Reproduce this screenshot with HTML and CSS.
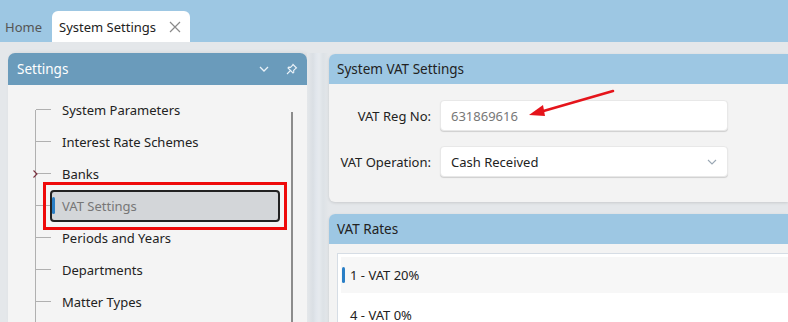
FILE: index.html
```html
<!DOCTYPE html>
<html>
<head>
<meta charset="utf-8">
<link rel="stylesheet" href="styles.css">
</head>
<body>
<div class="app">
  <div class="tabbar">
    <div class="tab home">Home</div>
    <div class="tab active">System Settings
      <svg class="close" width="12" height="12" viewBox="0 0 12 12"><path d="M1 1L11 11M11 1L1 11" stroke="#8a8a8a" stroke-width="1.2" fill="none"/></svg>
    </div>
  </div>
  <div class="main">
    <div class="left">
      <div class="lhead">
        <span class="ltitle">Settings</span>
        <svg class="chev" width="10" height="6" viewBox="0 0 10 6"><path d="M1 1L5 5L9 1" stroke="#eaf2f8" stroke-width="1.3" fill="none"/></svg>
        <svg class="pin" width="12" height="12" viewBox="0 0 12 12"><g fill="none" stroke="#eaf2f8" stroke-width="1.1"><path d="M7 1.5L10.5 5L9.5 5.6L7.6 7.5L7.8 9.3L7 10L2 5L2.7 4.2L4.5 4.4L6.4 2.5Z"/><path d="M4.5 7.5L1 11"/></g></svg>
      </div>
      <div class="lbody">
        <div class="tree">
          <div class="row"><span class="tick"></span>System Parameters</div>
          <div class="row"><span class="tick"></span>Interest Rate Schemes</div>
          <div class="row"><span class="tick"></span><svg class="exp" width="5" height="8" viewBox="0 0 5 8"><path d="M0.5 0.5L4 4L0.5 7.5" stroke="#7a2e3c" stroke-width="1.1" fill="none"/></svg>Banks</div>
          <div class="row sel"><span class="tick"></span><div class="selbox"><span class="bar"></span>VAT Settings</div></div>
          <div class="row"><span class="tick"></span>Periods and Years</div>
          <div class="row"><span class="tick"></span>Departments</div>
          <div class="row"><span class="tick"></span>Matter Types</div>
        </div>
        <div class="scroll"></div>
      </div>
    </div>
    <div class="splitter"></div>
    <div class="right">
      <div class="card first">
        <div class="chead">System VAT Settings</div>
        <div class="cbody form">
          <div class="frow"><label>VAT Reg No:</label><div class="input muted">631869616</div></div>
          <div class="frow"><label>VAT Operation:</label><div class="input">Cash Received
            <svg class="dd" width="10" height="6" viewBox="0 0 10 6"><path d="M1 1L5 5L9 1" stroke="#9aa7b4" stroke-width="1.1" fill="none"/></svg></div></div>
        </div>
      </div>
      <div class="card second">
        <div class="chead">VAT Rates</div>
        <div class="cbody list">
          <div class="listbox">
            <div class="item cur"><span class="bar"></span>1 - VAT 20%</div>
            <div class="item next">4 - VAT 0%</div>
          </div>
        </div>
      </div>
    </div>
  </div>
  <svg class="arrow" width="90" height="34" viewBox="0 0 90 34"><path d="M87 2L14 23" stroke="#e5141b" stroke-width="2.6" fill="none" stroke-linecap="round"/><path d="M3 26L17 16L19 27Z" fill="#e5141b"/></svg>
</div>
</body>
</html>
```
FILE: styles.css
```css
html, body { margin: 0; padding: 0; }
body {
  width: 788px; height: 322px; overflow: hidden;
  font-family: "Noto Sans", "Open Sans", sans-serif;
  font-size: 13px; color: #222;
  background: #e4e7ea;
}
.app { position: relative; width: 788px; height: 322px; overflow: hidden; }
.tabbar {
  height: 42px; background: #9dc7e3;
  display: flex; align-items: flex-end;
}
.tab { height: 31px; display: flex; align-items: center; }
.tab.home { padding: 0 10px 0 5px; color: #555; }
.tab.active {
  background: #fff; border-radius: 6px 6px 0 0; box-sizing: border-box;
  padding: 0 9px 0 7px; width: 138px; justify-content: space-between; color: #222;
}
.close { margin-top: 1px; }
.main { display: flex; height: 280px; padding-top: 11px; box-sizing: border-box; }
.left {
  margin-left: 8px; width: 299px; display: flex; flex-direction: column;
  box-shadow: 2px 0 4px rgba(0,0,0,0.08);
  border-radius: 7px 7px 0 0;
}
.lhead {
  height: 32px; background: #6a9bbb; border-radius: 7px 7px 0 0;
  display: flex; align-items: center; padding: 0 9px; color: #fff; flex-shrink: 0;
}
.ltitle { flex: 1; font-size: 13.5px; }
.chev { margin-right: 17px; }
.lbody { flex: 1; background: #f4f4f4; position: relative; display: flex; }
.tree {
  flex: 1; position: relative; margin-left: 27px;
  border-left: 1px solid #b0b0b0; margin-top: 25px;
}
.row {
  height: 32px; display: flex; align-items: center; position: relative;
  padding-left: 26px; margin-top: -16px; margin-bottom: 16px; color: #222;
}
.tick { position: absolute; left: 0; top: 15px; width: 15px; border-top: 1px solid #b0b0b0; }
.exp { position: absolute; left: -3px; top: 12px; }
.row.sel { padding-left: 14px; }
.selbox {
  position: relative; box-sizing: border-box;
  width: 230px; height: 32px; background: #d3d6d9; border: 2px solid #222; border-radius: 4px;
  display: flex; align-items: center; padding-left: 10px; color: #777;
}
.selbox::after {
  content: ""; position: absolute; left: -9px; top: -10px; right: -9px; bottom: -10px;
  border: 3px solid #ee0a0a;
}
.selbox .bar { position: absolute; left: 0; top: 5px; width: 3px; height: 17px; background: #2a7fc6; border-radius: 2px; }
.scroll { width: 2px; background: #8c8c8c; margin: 27px 14px 0 0; }
.splitter {
  width: 22px;
  background: linear-gradient(to right, #e4e7ea 0, #dadfe4 6px, #e1e6ec 9px, #e6eaee 12px, #dde2e6 16px, #e4e7ea 22px);
}
.right { flex: 1; display: flex; flex-direction: column; gap: 12px; padding-top: 1px; }
.card { border-radius: 6px 0 0 6px; box-shadow: 0 1px 3px rgba(0,0,0,0.12); background: #f3f3f3; }
.chead {
  height: 30px; background: #9dc7e3; border-radius: 6px 0 0 0;
  display: flex; align-items: center; padding-left: 8px; color: #222; font-size: 13.5px;
}
.form { padding: 16px 0 25px 0; display: flex; flex-direction: column; gap: 15px; }
.frow { display: flex; align-items: center; }
.frow label { width: 111px; text-align: right; padding-right: 9px; box-sizing: border-box; white-space: nowrap; }
.input {
  width: 288px; height: 31px; box-sizing: border-box; background: #fff; border-radius: 4px;
  box-shadow: 0 1px 1px rgba(0,0,0,0.15); border: 1px solid #e8e8e8;
  display: flex; align-items: center; padding: 0 10px; justify-content: space-between;
}
.input.muted { color: #777; }
.list { padding: 9px 0 0 8px; height: 120px; }
.listbox { background: #fff; border: 1px solid #d6dde5; border-right: none; height: 100%; padding: 3px 0 0 3px; }
.item { height: 36px; display: flex; align-items: center; padding-left: 9px; position: relative; }
.item.cur { background: #f7f7f7; }
.item .bar { position: absolute; left: 1px; top: 10px; width: 3px; height: 16px; background: #2a7fc6; border-radius: 2px; }
.item.next { height: 44px; }
.arrow { position: absolute; left: 526px; top: 89px; }
```
